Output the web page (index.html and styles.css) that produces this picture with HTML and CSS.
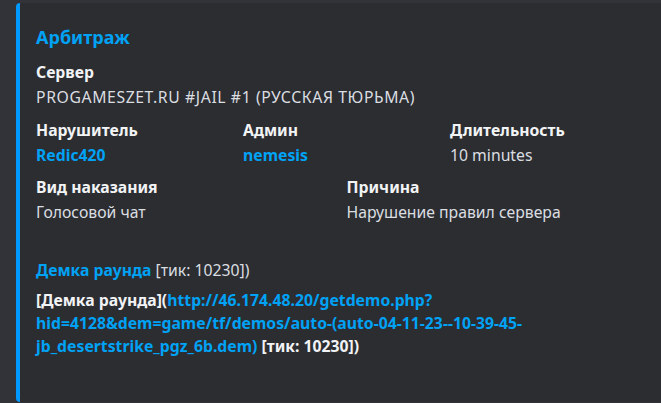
FILE: index.html
```html
<!DOCTYPE html>
<html lang="ru">
<head>
  <meta charset="UTF-8" />
  <title>Арбитраж</title>
  <meta name="viewport" content="width=device-width, initial-scale=1.0" />
  <link rel="stylesheet" href="styles.css">
</head>
<body>
  <div class="embed">
    <div class="embed-title">Арбитраж</div>

    <div class="fields">
      <div class="field full">
        <div class="field-name">Сервер</div>
        <div class="field-value caps">PROGAMESZET.RU #JAIL #1 (РУССКАЯ ТЮРЬМА)</div>
      </div>

      <div class="field third">
        <div class="field-name">Нарушитель</div>
        <div class="field-value"><a class="link" href="#">Redic420</a></div>
      </div>
      <div class="field third">
        <div class="field-name">Админ</div>
        <div class="field-value"><a class="link" href="#">nemesis</a></div>
      </div>
      <div class="field third">
        <div class="field-name">Длительность</div>
        <div class="field-value">10 minutes</div>
      </div>

      <div class="field half">
        <div class="field-name">Вид наказания</div>
        <div class="field-value">Голосовой чат</div>
      </div>
      <div class="field half">
        <div class="field-name">Причина</div>
        <div class="field-value">Нарушение правил сервера</div>
      </div>

      <div class="field full">
        <div class="field-name blank"></div>
        <div class="field-value"><a class="link" href="#">Демка раунда</a> [тик: 10230])</div>
      </div>
    </div>

    <div class="raw">
      [Демка раунда](<a class="link" href="#">http://46.174.48.20/getdemo.php?<br>hid=4128&amp;dem=game/tf/demos/auto-(auto-04-11-23--10-39-45-<br>jb_desertstrike_pgz_6b.dem)</a> [тик: 10230])
    </div>
  </div>
</body>
</html>
```

FILE: styles.css
```css
body {
  margin: 0;
  padding: 3px 0 0 16px;
  background: #313338;
  color: #dbdee1;
  font-family: 'Noto Sans', 'Open Sans', sans-serif;
  font-size: 15.75px;
  overflow: hidden;
}

.embed {
  height: 399px;
  box-sizing: border-box;
  padding: 23px 12px 0 16px;
  background: #2b2d31;
  border-left: 4px solid #0099ff;
  border-radius: 4px 0 0 4px;
}

.embed-title {
  font-size: 18px;
  line-height: 22px;
  font-weight: 700;
  color: #00a2f5;
}

.fields {
  display: grid;
  grid-template-columns: repeat(6, 1fr);
  column-gap: 8px;
  row-gap: 12.5px;
  margin-top: 14px;
}

.field.full {
  grid-column: span 6;
}

.field.third {
  grid-column: span 2;
}

.field.half {
  grid-column: span 3;
}

.field-name {
  line-height: 20px;
  font-weight: 700;
  color: #f2f3f5;
  margin-bottom: 5px;
}

.field-name.blank {
  height: 20px;
}

.field-value {
  line-height: 20px;
}

.caps {
  letter-spacing: 0.6px;
}

.link {
  color: #00a2f5;
  font-weight: 700;
  text-decoration: none;
}

.raw {
  margin-top: 9.5px;
  line-height: 23px;
  font-weight: 700;
  color: #f2f3f5;
}
```
